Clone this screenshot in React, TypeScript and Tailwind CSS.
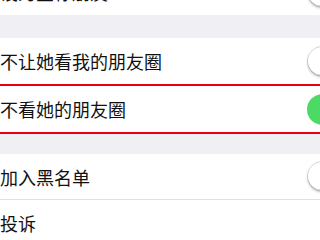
const Toggle = ({ on = false }: { on?: boolean }) => {
  if (on) {
    return (
      <div className="relative w-[51px] h-[31px] shrink-0 mr-[-38px] rounded-full bg-[#4cd964]">
        <div className="absolute right-[2px] top-[2px] w-[27px] h-[27px] rounded-full bg-white shadow" />
      </div>
    );
  }
  return (
    <div className="relative w-[51px] h-[31px] shrink-0 mr-[-38px] rounded-full border-[1.5px] border-[#e5e5ea] bg-white">
      <div className="absolute left-0 top-[0px] w-[28px] h-[28px] rounded-full bg-white shadow-[0_2px_3px_rgba(0,0,0,0.25),0_0_0_1px_rgba(0,0,0,0.06)]" />
    </div>
  );
};

const Row = ({ label, toggle, on, className = "" }: { label: string; toggle?: boolean; on?: boolean; className?: string }) => (
  <div className={`flex items-center h-[46px] bg-white ${className}`}>
    <span className="text-[18px] leading-none text-[#111] whitespace-nowrap">{label}</span>
    {toggle && <div className="ml-auto flex items-center"><Toggle on={on} /></div>}
  </div>
);

const App = () => {
  return (
    <div
      className="w-[320px] h-[240px] overflow-hidden bg-white"
      style={{ fontFamily: '"Noto Sans CJK SC", "Noto Sans", sans-serif' }}
    >
      <Row label="设为星标朋友" toggle className="mt-[-31px]" />
      <div className="h-[23px] bg-[#efeff4]" />
      <Row label="不让她看我的朋友圈" toggle className="h-[45px]" />
      <div className="border-y-2 border-[#e60012]">
        <Row label="不看她的朋友圈" toggle on className="h-[45px]" />
      </div>
      <div className="h-[20px] bg-[#efeff4]" />
      <Row label="加入黑名单" toggle className="h-[45px] border-b border-[#e0e0e4]" />
      <Row label="投诉" />
    </div>
  );
};

export default App;
